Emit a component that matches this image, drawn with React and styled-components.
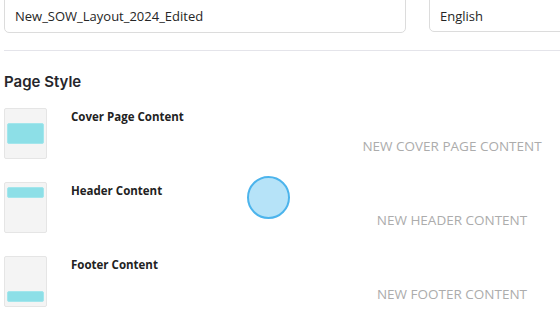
import styled, { createGlobalStyle } from "styled-components";

const GlobalStyle = createGlobalStyle`
    html, body {
        margin: 0;
        padding: 0;
        background: #ffffff;
        overflow: hidden;
    }
    * {
        box-sizing: border-box;
    }
`

const Page = styled.div`
    position: relative;
    width: 560px;
    height: 325px;
    padding-left: 4px;
    font-family: "Open Sans", "Liberation Sans", sans-serif;
    overflow: hidden;
`

const TopRow = styled.div`
    display: flex;
    gap: 23px;
    margin-top: -6px;
    white-space: nowrap;
`

const Field = styled.div`
    flex-shrink: 0;
    width: ${({w}) => w}px;
    height: ${({h}) => h}px;
    display: flex;
    align-items: center;
    padding: 5px 10px 0;
    border: 1px solid #dcdcdc;
    border-radius: 5px;
    font-size: 13px;
    color: #262626;
`

const Divider = styled.div`
    height: 1px;
    margin-top: 17px;
    background: #e4e4ea;
`

const Heading = styled.h2`
    margin: 21px 0 0;
    font-family: Inter, "Open Sans", sans-serif;
    font-size: 15px;
    line-height: 20px;
    font-weight: 600;
    color: #26262b;
`

const List = styled.div`
    margin-top: 16px;
    display: flex;
    flex-direction: column;
    gap: 23px;
`

const Row = styled.div`
    display: grid;
    grid-template-columns: 43px 249px 1fr;
    column-gap: 24px;
    align-items: start;
`

const Thumb = styled.div`
    width: 43px;
    height: 51px;
    display: flex;
    flex-direction: column;
    justify-content: ${({pos}) => pos === 'top' ? 'flex-start' : pos === 'bottom' ? 'flex-end' : 'center'};
    padding: 4px 2px;
    background: #f4f4f4;
    border: 1px solid #e5e5e5;
    border-radius: 2px;
`

const Bar = styled.div`
    height: ${({h}) => h}px;
    background: #8ddfe7;
    border: 1px solid #a3e6ec;
    border-radius: 2px;
`

const Label = styled.div`
    margin-top: 1px;
    font-size: 11.5px;
    line-height: 15px;
    font-weight: 700;
    color: #222222;
`

const Preview = styled.div`
    margin-top: 29px;
    text-align: center;
    font-size: 13.5px;
    line-height: 18px;
    font-weight: 400;
    color: #acacac;
    white-space: nowrap;
`

const ClickMark = styled.div`
    position: absolute;
    left: 247px;
    top: 176px;
    width: 43px;
    height: 43px;
    border-radius: 50%;
    background: #b6e3f8;
    border: 2px solid #4cb4ec;
`

const pageStyles = [
    { id: 'cover', label: 'Cover Page Content', preview: 'NEW COVER PAGE CONTENT', pos: 'center', bar: 21 },
    { id: 'header', label: 'Header Content', preview: 'NEW HEADER CONTENT', pos: 'top', bar: 11 },
    { id: 'footer', label: 'Footer Content', preview: 'NEW FOOTER CONTENT', pos: 'bottom', bar: 11 },
]

const App = () => {
    return (
        <Page>
            <GlobalStyle />
            <TopRow>
                <Field w={402} h={39}>New_SOW_Layout_2024_Edited</Field>
                <Field w={200} h={38}>English</Field>
            </TopRow>
            <Divider />
            <Heading>Page Style</Heading>
            <List>
                {pageStyles.map(item => (
                    <Row key={item.id}>
                        <Thumb pos={item.pos}>
                            <Bar h={item.bar} />
                        </Thumb>
                        <Label>{item.label}</Label>
                        <Preview>{item.preview}</Preview>
                    </Row>
                ))}
            </List>
            <ClickMark />
        </Page>
    );
}

export default App;
